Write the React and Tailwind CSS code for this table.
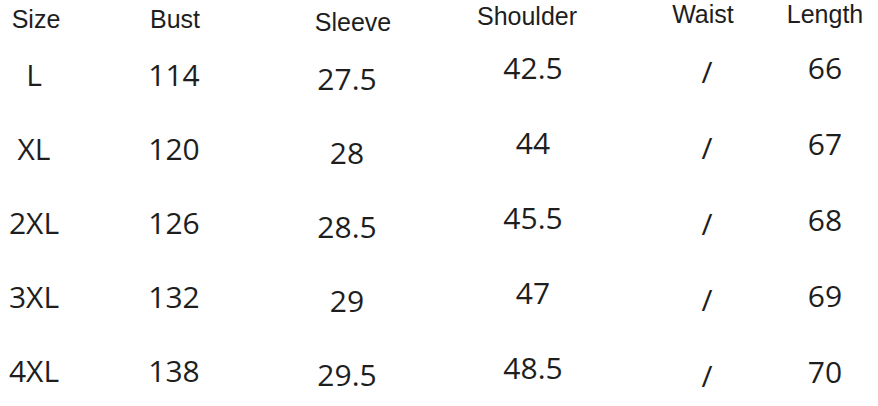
const columns = [
  {
    title: "Size",
    values: ["L", "XL", "2XL", "3XL", "4XL"],
    width: "w-[68px]",
    head: "mt-[7px] ml-[4px]",
    body: "mt-[28px] gap-[44px]",
  },
  {
    title: "Bust",
    values: ["114", "120", "126", "132", "138"],
    width: "w-[212px]",
    head: "mt-[7px] ml-[2px]",
    body: "mt-[28px] gap-[44px]",
  },
  {
    title: "Sleeve",
    values: ["27.5", "28", "28.5", "29", "29.5"],
    width: "w-[134px]",
    head: "mt-[10px] ml-[12px]",
    body: "mt-[29px] gap-[44px]",
  },
  {
    title: "Shoulder",
    values: ["42.5", "44", "45.5", "47", "48.5"],
    width: "w-[238px]",
    head: "mt-[4px] mr-[12px]",
    body: "mt-[24px] gap-[45px]",
  },
  {
    title: "Waist",
    values: ["/", "/", "/", "/", "/"],
    width: "w-[110px]",
    head: "mt-[2px] mr-[8px]",
    body: "mt-[30px] gap-[46px]",
  },
  {
    title: "Length",
    values: ["66", "67", "68", "69", "70"],
    width: "w-[126px]",
    head: "mt-[2px]",
    body: "mt-[26px] gap-[46px]",
  },
];

export default function App() {
  return (
    <div className="w-[878px] h-[406px] bg-white overflow-hidden flex text-[#1e1e1e]">
      {columns.map((col) => (
        <div key={col.title} className={`${col.width} shrink-0 flex flex-col items-center`}>
          <div
            className={`${col.head} h-[25px] text-[25px] leading-[25px] whitespace-nowrap font-['Liberation_Sans',Arial,sans-serif]`}
          >
            {col.title}
          </div>
          <div className={`${col.body} flex flex-col items-center`}>
            {col.values.map((v, i) => (
              <div
                key={i}
                className="h-[30px] text-[30px] leading-[30px] whitespace-nowrap font-['Open_Sans','Noto_Sans',sans-serif]"
              >
                {v}
              </div>
            ))}
          </div>
        </div>
      ))}
    </div>
  );
}
